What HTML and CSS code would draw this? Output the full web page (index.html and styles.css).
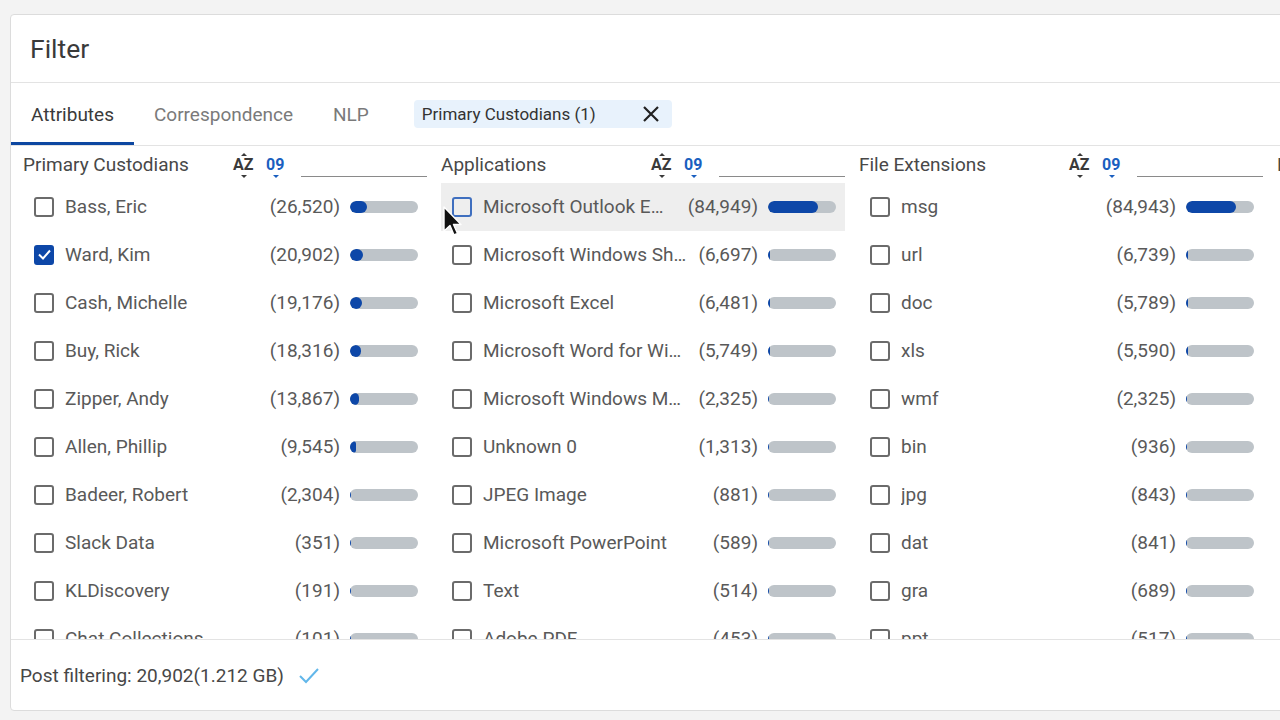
FILE: index.html
```html
<!DOCTYPE html>
<html lang="en">
<head>
<meta charset="utf-8">
<title>Filter</title>
<link rel="stylesheet" href="styles.css">
</head>
<body>
<div class="card">
  <div class="card-header">Filter</div>
  <div class="tabs">
    <div class="tab active">Attributes</div>
    <div class="tab">Correspondence</div>
    <div class="tab">NLP</div>
    <div class="chip">
      <span class="chip-text">Primary Custodians (1)</span>
      <svg class="chip-x" width="18" height="18" viewBox="0 0 18 18"><path d="M2 2 L16 16 M16 2 L2 16" stroke="#222" stroke-width="2.2" fill="none"/></svg>
    </div>
  </div>
  <div class="columns">
    <section class="col">
      <div class="col-head">
        <span class="col-title">Primary Custodians</span>
        <span class="sort az">AZ</span>
        <span class="sort num">09</span>
        <span class="search"></span>
      </div>
      <ul class="rows">
        <li class="row"><span class="cb"></span><span class="label">Bass, Eric</span><span class="count">(26,520)</span><span class="bar"><span class="fill" style="width:25%"></span></span></li>
        <li class="row"><span class="cb checked"><svg width="15" height="15" viewBox="0 0 15 15"><path d="M2 7.5 L6 11.5 L13 3.5" stroke="#fff" stroke-width="2" fill="none"/></svg></span><span class="label">Ward, Kim</span><span class="count">(20,902)</span><span class="bar"><span class="fill" style="width:19%"></span></span></li>
        <li class="row"><span class="cb"></span><span class="label">Cash, Michelle</span><span class="count">(19,176)</span><span class="bar"><span class="fill" style="width:17.5%"></span></span></li>
        <li class="row"><span class="cb"></span><span class="label">Buy, Rick</span><span class="count">(18,316)</span><span class="bar"><span class="fill" style="width:16.5%"></span></span></li>
        <li class="row"><span class="cb"></span><span class="label">Zipper, Andy</span><span class="count">(13,867)</span><span class="bar"><span class="fill" style="width:13%"></span></span></li>
        <li class="row"><span class="cb"></span><span class="label">Allen, Phillip</span><span class="count">(9,545)</span><span class="bar"><span class="fill" style="width:8.5%"></span></span></li>
        <li class="row"><span class="cb"></span><span class="label">Badeer, Robert</span><span class="count">(2,304)</span><span class="bar"><span class="fill" style="width:2%"></span></span></li>
        <li class="row"><span class="cb"></span><span class="label">Slack Data</span><span class="count">(351)</span><span class="bar"><span class="fill" style="width:0.4%"></span></span></li>
        <li class="row"><span class="cb"></span><span class="label">KLDiscovery</span><span class="count">(191)</span><span class="bar"><span class="fill" style="width:0.3%"></span></span></li>
        <li class="row"><span class="cb"></span><span class="label">Chat Collections</span><span class="count">(101)</span><span class="bar"><span class="fill" style="width:0.2%"></span></span></li>
        <li class="row"><span class="cb"></span><span class="label">Lay, Kenneth</span><span class="count">(64)</span><span class="bar"><span class="fill" style="width:0.1%"></span></span></li>
      </ul>
    </section>
    <section class="col">
      <div class="col-head">
        <span class="col-title">Applications</span>
        <span class="sort az">AZ</span>
        <span class="sort num">09</span>
        <span class="search"></span>
      </div>
      <ul class="rows">
        <li class="row hover"><span class="cb focus"></span><span class="label">Microsoft Outlook Email</span><span class="count">(84,949)</span><span class="bar"><span class="fill" style="width:74%"></span></span></li>
        <li class="row"><span class="cb"></span><span class="label">Microsoft Windows Shortcut</span><span class="count">(6,697)</span><span class="bar"><span class="fill" style="width:3%"></span></span></li>
        <li class="row"><span class="cb"></span><span class="label">Microsoft Excel</span><span class="count">(6,481)</span><span class="bar"><span class="fill" style="width:2.8%"></span></span></li>
        <li class="row"><span class="cb"></span><span class="label">Microsoft Word for Windows</span><span class="count">(5,749)</span><span class="bar"><span class="fill" style="width:2.5%"></span></span></li>
        <li class="row"><span class="cb"></span><span class="label">Microsoft Windows Metafile</span><span class="count">(2,325)</span><span class="bar"><span class="fill" style="width:1.5%"></span></span></li>
        <li class="row"><span class="cb"></span><span class="label">Unknown 0</span><span class="count">(1,313)</span><span class="bar"><span class="fill" style="width:1%"></span></span></li>
        <li class="row"><span class="cb"></span><span class="label">JPEG Image</span><span class="count">(881)</span><span class="bar"><span class="fill" style="width:0.8%"></span></span></li>
        <li class="row"><span class="cb"></span><span class="label">Microsoft PowerPoint</span><span class="count">(589)</span><span class="bar"><span class="fill" style="width:0.5%"></span></span></li>
        <li class="row"><span class="cb"></span><span class="label">Text</span><span class="count">(514)</span><span class="bar"><span class="fill" style="width:0.5%"></span></span></li>
        <li class="row"><span class="cb"></span><span class="label">Adobe PDF</span><span class="count">(453)</span><span class="bar"><span class="fill" style="width:0.4%"></span></span></li>
        <li class="row"><span class="cb"></span><span class="label">HTML</span><span class="count">(212)</span><span class="bar"><span class="fill" style="width:0.2%"></span></span></li>
      </ul>
    </section>
    <section class="col">
      <div class="col-head">
        <span class="col-title">File Extensions</span>
        <span class="sort az">AZ</span>
        <span class="sort num">09</span>
        <span class="search"></span>
      </div>
      <ul class="rows">
        <li class="row"><span class="cb"></span><span class="label">msg</span><span class="count">(84,943)</span><span class="bar"><span class="fill" style="width:74%"></span></span></li>
        <li class="row"><span class="cb"></span><span class="label">url</span><span class="count">(6,739)</span><span class="bar"><span class="fill" style="width:3%"></span></span></li>
        <li class="row"><span class="cb"></span><span class="label">doc</span><span class="count">(5,789)</span><span class="bar"><span class="fill" style="width:2.5%"></span></span></li>
        <li class="row"><span class="cb"></span><span class="label">xls</span><span class="count">(5,590)</span><span class="bar"><span class="fill" style="width:2.4%"></span></span></li>
        <li class="row"><span class="cb"></span><span class="label">wmf</span><span class="count">(2,325)</span><span class="bar"><span class="fill" style="width:1.5%"></span></span></li>
        <li class="row"><span class="cb"></span><span class="label">bin</span><span class="count">(936)</span><span class="bar"><span class="fill" style="width:0.8%"></span></span></li>
        <li class="row"><span class="cb"></span><span class="label">jpg</span><span class="count">(843)</span><span class="bar"><span class="fill" style="width:0.7%"></span></span></li>
        <li class="row"><span class="cb"></span><span class="label">dat</span><span class="count">(841)</span><span class="bar"><span class="fill" style="width:0.7%"></span></span></li>
        <li class="row"><span class="cb"></span><span class="label">gra</span><span class="count">(689)</span><span class="bar"><span class="fill" style="width:0.6%"></span></span></li>
        <li class="row"><span class="cb"></span><span class="label">ppt</span><span class="count">(517)</span><span class="bar"><span class="fill" style="width:0.5%"></span></span></li>
        <li class="row"><span class="cb"></span><span class="label">pdf</span><span class="count">(453)</span><span class="bar"><span class="fill" style="width:0.4%"></span></span></li>
      </ul>
    </section>
    <section class="col">
      <div class="col-head">
        <span class="col-title">Languages</span>
      </div>
      <ul class="rows">
        <li class="row"><span class="cb"></span><span class="label">English</span><span class="count">(98,120)</span><span class="bar"><span class="fill" style="width:80%"></span></span></li>
      </ul>
    </section>
  </div>
  <div class="footer">
    <span class="footer-text">Post filtering: 20,902(1.212 GB)</span>
    <svg class="footer-check" width="22" height="18" viewBox="0 0 22 18"><path d="M2 10 L8 16 L20 3" stroke="#62b7ea" stroke-width="2" fill="none"/></svg>
  </div>
</div>
<svg class="cursor" width="20" height="32" viewBox="0 0 20 32"><path d="M1 1 L1 25 L7 19.5 L11 29 L14.5 27.5 L10.5 18.5 L18 18.5 Z" fill="#111" stroke="#fff" stroke-width="1.4" stroke-linejoin="round"/></svg>
</body>
</html>
```

FILE: styles.css
```css
* { box-sizing: border-box; }

body {
  margin: 0;
  background: #f3f3f3;
  font-family: Roboto, "Noto Sans", "Liberation Sans", sans-serif;
  overflow: hidden;
  width: 1280px;
  height: 720px;
}

.card {
  margin: 14px 0 0 10px;
  width: 1300px;
  height: 697px;
  background: #fff;
  border: 1px solid #dcdcdc;
  border-radius: 4px;
  display: flex;
  flex-direction: column;
  overflow: hidden;
}

.card-header {
  height: 68px;
  flex: none;
  display: flex;
  align-items: center;
  padding-left: 19px;
  font-size: 26.5px;
  color: #3a3a3a;
  border-bottom: 1px solid #e3e3e3;
}

.tabs {
  height: 63px;
  flex: none;
  display: flex;
  align-items: center;
  border-bottom: 1px solid #e3e3e3;
}

.tab {
  height: 100%;
  display: flex;
  align-items: center;
  padding: 0 20px;
  font-size: 19px;
  color: #7a7a7a;
  border-top: 3px solid transparent;
  border-bottom: 3px solid transparent;
}

.tab.active {
  color: #3a3a3a;
  border-bottom-color: #0d47a1;
}

.chip {
  margin-left: 25px;
  height: 28px;
  display: flex;
  align-items: center;
  padding: 0 12px 0 8px;
  background: #e8f2fc;
  border-radius: 4px;
  font-size: 17px;
  color: #333;
}

.chip-x {
  margin-left: 46px;
  display: block;
}

.columns {
  flex: 1;
  min-height: 0;
  display: grid;
  grid-template-columns: repeat(4, 404px);
  column-gap: 14px;
  padding-left: 12px;
  overflow: hidden;
}

.col {
  min-width: 0;
}

.col-head {
  height: 37px;
  display: flex;
  align-items: center;
}

.col-title {
  flex: 0 0 210px;
  font-size: 19px;
  color: #484848;
  white-space: nowrap;
}

.sort {
  position: relative;
  font-size: 16px;
  font-weight: 700;
  line-height: 1;
}

.sort.az {
  color: #3a3a3a;
  width: 22px;
  margin-right: 11px;
}

.sort.num {
  color: #1a5fc0;
  width: 20px;
}

.sort::after {
  content: "";
  position: absolute;
  left: 50%;
  bottom: -5px;
  margin-left: -3px;
  border-left: 3px solid transparent;
  border-right: 3px solid transparent;
  border-top: 3px solid currentColor;
}

.sort.az::before {
  content: "";
  position: absolute;
  left: 50%;
  top: -4px;
  margin-left: -3px;
  border-left: 3px solid transparent;
  border-right: 3px solid transparent;
  border-bottom: 3px solid currentColor;
}

.search {
  flex: 1;
  margin-left: 15px;
  align-self: flex-end;
  margin-bottom: 6px;
  height: 24px;
  border-bottom: 1px solid #8a8a8a;
}

.rows {
  list-style: none;
  margin: 0;
  padding: 0;
}

.row {
  height: 48px;
  display: flex;
  align-items: center;
  padding: 0 9px 1px 11px;
}

.row.hover {
  background: #eeeeee;
}

.cb {
  flex: none;
  width: 20px;
  height: 20px;
  border: 2px solid #6b6b6b;
  border-radius: 3px;
  margin-right: 11px;
  display: flex;
  align-items: center;
  justify-content: center;
}

.cb.checked {
  background: #0d47a8;
  border-color: #0d47a8;
}

.cb.focus {
  border-color: #3f6fbf;
}

.label {
  flex: 1;
  min-width: 0;
  white-space: nowrap;
  overflow: hidden;
  text-overflow: ellipsis;
  font-size: 19px;
  color: #595959;
}

.count {
  flex: none;
  margin-left: 10px;
  font-size: 19px;
  color: #595959;
}

.bar {
  flex: none;
  width: 68px;
  height: 12px;
  margin-left: 10px;
  border-radius: 6px;
  background: #bec4c9;
  overflow: hidden;
}

.fill {
  display: block;
  height: 100%;
  background: #0d47a8;
  border-radius: 6px;
}

.footer {
  height: 71px;
  flex: none;
  border-top: 1px solid #e3e3e3;
  display: flex;
  align-items: center;
  padding-left: 9px;
  font-size: 19px;
  color: #474747;
}

.footer-check {
  margin-left: 14px;
  display: block;
}

.cursor {
  position: absolute;
  left: 443px;
  top: 206px;
}
```
